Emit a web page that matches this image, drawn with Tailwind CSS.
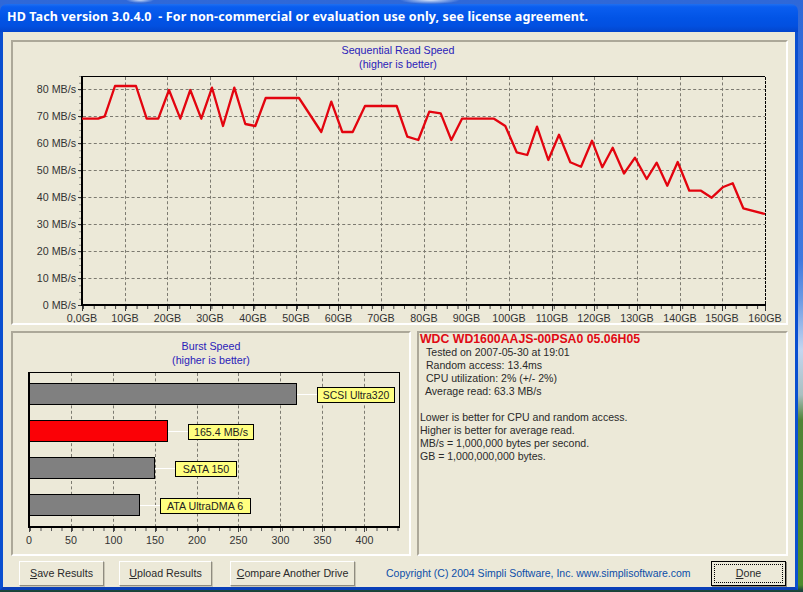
<!DOCTYPE html>
<html>
<head>
<meta charset="utf-8">
<script src="https://cdn.jsdelivr.net/npm/@tailwindcss/browser@4"></script>
</head>
<body class="w-[803px] h-[592px] overflow-hidden font-['Liberation_Sans',Arial,sans-serif] bg-[radial-gradient(ellipse_30px_4px_at_430px_0px,#d5e3f8,transparent),radial-gradient(ellipse_14px_3px_at_140px_0px,#c5d8f5,transparent),linear-gradient(to_bottom,#2f68d8_0px,#3f78df_260px,#6c9ae4_300px,#c3d6f0_350px,#a9bfc0_395px,#4f8436_420px,#4c8c2e_585px,#1d4a3c_590px,#18403a_592px)]">
<div class="w-[798px] h-[586px] mt-[4px] flex flex-col rounded-t-[7px] overflow-hidden">
  <div class="h-[28px] shrink-0 flex items-center pl-[7px] pb-[2px] bg-[linear-gradient(to_bottom,#1f6ff0_0px,#0a5ef0_3px,#0254e6_14px,#0250e0_22px,#0345cc_28px)] text-white font-bold text-[12.5px] font-['Noto_Sans',sans-serif] whitespace-pre tracking-[0.11px]">HD Tach version 3.0.4.0  - For non-commercial or evaluation use only, see license agreement.</div>
  <div class="flex-1 flex flex-col bg-[#ECE9D8] border-x-[3px] border-b-[3px] border-x-[#0a4fd0] border-b-[#0a3fb8] pl-[8px] pr-[7px] pt-[8px]">
    <section class="h-[285px] border-2 border-t-[#ACA899] border-l-[#ACA899] border-r-white border-b-white">
      <svg class="block" width="773" height="281" viewBox="13 42 773 281" font-family="Liberation Sans, Arial, sans-serif" font-size="10.7" fill="#333">
        <text x="398" y="54" text-anchor="middle" fill="#2a22b8">Sequential Read Speed</text>
        <text x="398" y="68" text-anchor="middle" fill="#2a22b8">(higher is better)</text>
        <g stroke="#7c7a70" stroke-width="1" stroke-dasharray="3 2.4" fill="none">
          <path d="M83 89.5H765M83 116.5H765M83 143.5H765M83 170.5H765M83 197.5H765M83 224.5H765M83 251.5H765M83 278.5H765"/>
          <path d="M125.5 77V304M167.5 77V304M210.5 77V304M253.5 77V304M296.5 77V304M338.5 77V304M381.5 77V304M424.5 77V304M466.5 77V304M509.5 77V304M552.5 77V304M594.5 77V304M637.5 77V304M680.5 77V304M722.5 77V304"/>
        </g>
        <path d="M82 76.5H765" stroke="#000" fill="none"/>
        <path d="M765.5 77V305" stroke="#000" stroke-dasharray="3 1" fill="none"/>
        <path d="M82 76V306M81 305H766" stroke="#000" stroke-width="2" fill="none"/>
        <path d="M78 89.5H81M78 116.5H81M78 143.5H81M78 170.5H81M78 197.5H81M78 224.5H81M78 251.5H81M78 278.5H81M78 305.5H81" stroke="#333" fill="none"/>
        <path d="M80 76V305" stroke="#444" stroke-dasharray="1 5.75" fill="none"/>
        <path d="M82.5 306V311M125.5 306V311M167.5 306V311M210.5 306V311M253.5 306V311M296.5 306V311M338.5 306V311M381.5 306V311M424.5 306V311M466.5 306V311M509.5 306V311M552.5 306V311M594.5 306V311M637.5 306V311M680.5 306V311M722.5 306V311M765.5 306V311" stroke="#333" fill="none"/>
        <path d="M83 307.5H765" stroke="#444" stroke-width="3" stroke-dasharray="1 9.7" fill="none"/>
        <polyline fill="none" stroke="#e3040f" stroke-width="2.3" stroke-linejoin="round" points="82,118.7 98,118.7 104.7,116.3 115,86 136,86 146.7,118.7 158.3,118.7 169,90 180.3,118.7 190.3,90 201.3,118.7 212,87.7 223,126 234.3,87.7 245.3,124 255.3,126 265.7,98 299,98 321.3,132 331.3,101.7 342.3,132 352.7,132 365,106 396.7,106 407.3,136.7 418.3,140 429.3,111.7 440.7,113.3 451.3,140 462,118.7 494,118.7 505.3,126 516.7,152.3 527.3,155 537,126.7 548.3,160 559,134.7 570.3,162.3 581,166.7 592,140.7 602.3,167.3 612.7,147.7 624,173.5 635,157.7 646.7,179 656.7,162.7 667.3,185.7 677.7,162 689.3,190.7 701,190.7 711.7,197.7 722.7,187.3 732.7,183.3 743.3,208.3 765,214"/>
        <g text-anchor="end">
          <text x="76" y="93">80 MB/s</text><text x="76" y="120">70 MB/s</text><text x="76" y="147">60 MB/s</text><text x="76" y="174">50 MB/s</text><text x="76" y="201">40 MB/s</text><text x="76" y="228">30 MB/s</text><text x="76" y="255">20 MB/s</text><text x="76" y="282">10 MB/s</text><text x="76" y="309">0 MB/s</text>
        </g>
        <g text-anchor="middle">
          <text x="82" y="322">0,0GB</text><text x="125" y="322">10GB</text><text x="167.5" y="322">20GB</text><text x="210" y="322">30GB</text><text x="253" y="322">40GB</text><text x="296" y="322">50GB</text><text x="338.5" y="322">60GB</text><text x="381" y="322">70GB</text><text x="424" y="322">80GB</text><text x="466.5" y="322">90GB</text><text x="509" y="322">100GB</text><text x="552" y="322">110GB</text><text x="594" y="322">120GB</text><text x="637" y="322">130GB</text><text x="680" y="322">140GB</text><text x="722" y="322">150GB</text><text x="765" y="322">160GB</text>
        </g>
      </svg>
    </section>
    <div class="flex gap-[6px] mt-[6px] h-[225px]">
      <section class="w-[400px] border-2 border-t-[#ACA899] border-l-[#ACA899] border-r-white border-b-white">
        <svg class="block" width="396" height="221" viewBox="13 333 396 221" font-family="Liberation Sans, Arial, sans-serif" font-size="10.7" fill="#333">
          <text x="211" y="350" text-anchor="middle" fill="#2a22b8">Burst Speed</text>
          <text x="211" y="364" text-anchor="middle" fill="#2a22b8">(higher is better)</text>
          <path d="M71.5 373V526M113.5 373V526M155.5 373V526M197.5 373V526M238.5 373V526M280.5 373V526M322.5 373V526M364.5 373V526" stroke="#7c7a70" stroke-dasharray="3 2.4" fill="none"/>
          <rect x="29.5" y="372.5" width="370" height="154" fill="none" stroke="#000"/>
          <path d="M29 372V528M28 527H400" stroke="#000" stroke-width="2" fill="none"/>
          <path d="M29.5 528V532M71.5 528V532M113.5 528V532M155.5 528V532M197.5 528V532M238.5 528V532M280.5 528V532M322.5 528V532M364.5 528V532" stroke="#444" fill="none"/>
          <path d="M30 529.5H399" stroke="#555" stroke-width="3" stroke-dasharray="1 9.5" fill="none"/>
          <g stroke="#000">
            <rect x="29.5" y="383.5" width="267" height="21" fill="#808080"/>
            <rect x="29.5" y="420.5" width="138" height="21" fill="#fb0106"/>
            <rect x="29.5" y="457.5" width="125" height="21" fill="#808080"/>
            <rect x="29.5" y="494.5" width="110" height="21" fill="#808080"/>
          </g>
          <path d="M297 394.5H318M168 431.5H189M155 468.5H176M140 505.5H161" stroke="#fff" fill="none"/>
          <g stroke="#000" fill="#ffff80">
            <rect x="317.5" y="387.5" width="77" height="15"/>
            <rect x="188.5" y="424.5" width="65" height="15"/>
            <rect x="175.5" y="461.5" width="61" height="15"/>
            <rect x="160.5" y="498.5" width="90" height="15"/>
          </g>
          <g text-anchor="middle" fill="#222">
            <text x="356" y="399" font-size="10.4">SCSI Ultra320</text>
            <text x="221" y="436">165.4 MB/s</text>
            <text x="206" y="473">SATA 150</text>
            <text x="205" y="510">ATA UltraDMA 6</text>
          </g>
          <g text-anchor="middle">
            <text x="29" y="544">0</text><text x="71" y="544">50</text><text x="113.5" y="544">100</text><text x="155" y="544">150</text><text x="197" y="544">200</text><text x="238.5" y="544">250</text><text x="280.5" y="544">300</text><text x="322.5" y="544">350</text><text x="364.5" y="544">400</text>
          </g>
        </svg>
      </section>
      <section class="w-[371px] border-2 border-t-[#ACA899] border-l-[#ACA899] border-r-white border-b-white pl-[1px] text-[10.55px] leading-[13px] text-[#2a2a2a]">
        <div class="font-bold text-[12.3px] text-[#e00a14]">WDC WD1600AAJS-00PSA0 05.06H05</div>
        <div class="pl-[6px]">Tested on 2007-05-30 at 19:01</div>
        <div class="pl-[6px]">Random access: 13.4ms</div>
        <div class="pl-[6px]">CPU utilization: 2% (+/- 2%)</div>
        <div class="pl-[5px] mb-[13px]">Average read: 63.3 MB/s</div>
        <div>Lower is better for CPU and random access.</div>
        <div>Higher is better for average read.</div>
        <div>MB/s = 1,000,000 bytes per second.</div>
        <div>GB = 1,000,000,000 bytes.</div>
      </section>
    </div>
    <div class="flex items-center mt-[5px] h-[25px] text-[10.7px] text-[#2a2a2a]">
      <button class="w-[85px] h-[25px] ml-[8px] bg-[#ECE9D8] border border-t-white border-l-white border-r-[#8f8c80] border-b-[#8f8c80] shadow-[1px_1px_0_#c8c5b4]"><u>S</u>ave Results</button>
      <button class="w-[93px] h-[25px] ml-[15px] bg-[#ECE9D8] border border-t-white border-l-white border-r-[#8f8c80] border-b-[#8f8c80] shadow-[1px_1px_0_#c8c5b4]"><u>U</u>pload Results</button>
      <button class="w-[125px] h-[25px] ml-[18px] bg-[#ECE9D8] border border-t-white border-l-white border-r-[#8f8c80] border-b-[#8f8c80] shadow-[1px_1px_0_#c8c5b4]"><u>C</u>ompare Another Drive</button>
      <span class="ml-[31px] text-[#0b4ea8] text-[10.5px] whitespace-nowrap">Copyright (C) 2004 Simpli Software, Inc. www.simplisoftware.com</span>
      <button class="absolute left-[711px] w-[75px] h-[25px] bg-[#ECE9D8] border border-black shadow-[1px_1px_0_#8f8c80] p-[2px]"><span class="block h-full border border-dotted border-black leading-[17px]"><u>D</u>one</span></button>
    </div>
  </div>
</div>
</body>
</html>
